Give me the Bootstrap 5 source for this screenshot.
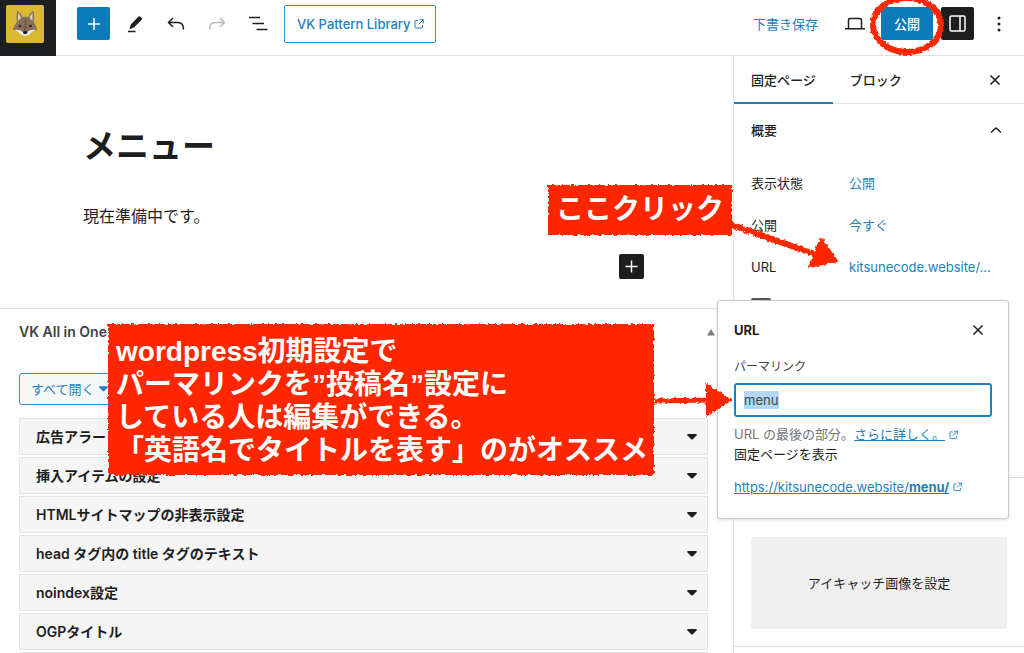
<!DOCTYPE html>
<html lang="ja">
<head>
<meta charset="utf-8">
<meta name="viewport" content="width=device-width, initial-scale=1">
<title>メニュー</title>
<link href="https://cdn.jsdelivr.net/npm/bootstrap@5.3.0/dist/css/bootstrap.min.css" rel="stylesheet">
<style>
:root { --accent: #0a7aba; --link: #1e80bd; --ink: #1e1e1e; --rule: #e0e0e0; --note: #ff2600; }
body { font-family: Inter, "Noto Sans CJK JP", sans-serif; font-size: 13px; line-height: 20px; color: var(--ink); background: #fff; }
a { color: var(--link); }
svg { display: block; }
.icon-btn { display: inline-flex; align-items: center; justify-content: center; border: 0; padding: 0; background: none; color: var(--ink); border-radius: 2px; }
.topbar { height: 56px; border-bottom: 1px solid var(--rule); }
.site-hub { width: 56px; height: 56px; background: #1d1e20; padding: 5px 0 0 6px; }
.tools-start { padding-left: 21px; }
.tools-end { padding-right: 17px; }
.tool { width: 33px; height: 33px; margin-bottom: 8px; }
.tool-primary { background: var(--accent); color: #fff; }
.tool-dark { background: var(--ink); color: #fff; }
.library-btn { height: 38px; margin: 0 0 8px 10px; padding: 0 11px 0 12px; border: 1px solid #3a93c7; border-radius: 2px; color: var(--link); background: #fff; font-weight: 500; }
.draft-btn { border: 0; background: none; color: var(--link); padding: 0; margin: 0 27px 8px 0; }
.publish-btn { width: 52px; height: 33px; border: 0; padding: 0; border-radius: 2px; color: #fff; background: var(--accent); font-weight: 500; }
.publish-ring { left: -13px; top: -13px; pointer-events: none; }
.canvas { padding: 65px 83px 0; height: 252px; }
.post-title { font-size: 33px; line-height: 50px; font-weight: 700; margin: 0 0 33px; }
.post-text { font-size: 16px; line-height: 24px; margin: 0; }
.inserter { width: 25px; height: 25px; margin: 26px 6px 0 0; background: var(--ink); color: #fff; }
.metabox { border-top: 1px solid var(--rule); padding: 13px 18px 0 19px; }
.metabox-title { font-size: 14px; line-height: 20px; font-weight: 600; color: #3c434a; margin: 0; }
.metabox-body { padding-right: 7px; }
.open-all { height: 32px; margin: 31px 0 13px; padding: 0 10px 0 11px; border: 1px solid #3a93c7; border-radius: 3px; background: #f6f7f7; color: var(--link); }
.option-row { width: 100%; height: 37px; margin-bottom: 2px; padding: 0 10px 0 16px; border: 1px solid #e4e4e4; background: #f5f5f5; color: var(--ink); font-size: 14px; font-weight: 600; text-align: left; }
.sidebar { width: 291px; border-left: 1px solid var(--rule); }
.tabs { height: 48px; border-bottom: 1px solid var(--rule); padding-right: 19px; }
.tab-btn { height: 48px; padding: 0 17px; border: 0; background: none; color: var(--ink); font-weight: 500; }
.tab-btn.active { border-bottom: 2px solid var(--link); padding-top: 2px; }
.summary { padding: 15px 17px 0 17px; height: 374px; border-bottom: 1px solid var(--rule); }
.summary-head { font-size: 13px; line-height: 22px; font-weight: 500; margin: 0 0 31px; }
.summary-row { height: 22px; line-height: 22px; margin-bottom: 20px; }
.summary-row dt { width: 98px; font-weight: 400; }
.summary-row dd { margin: 0; }
.template-icon { width: 20px; height: 16px; border: 2px solid #555; border-radius: 2px; }
.thumb-panel { padding: 59px 17px 17px; border-bottom: 1px solid var(--rule); }
.thumb-btn { width: 100%; height: 92px; border: 0; border-radius: 2px; background: #efefef; color: var(--ink); }
.url-popover { top: 244px; right: 15px; width: 292px; height: 219px; padding: 17px 16px; background: #fff; border: 1px solid #ccc; border-radius: 3px; box-shadow: 0 1px 3px rgba(0,0,0,.15); }
.url-popover h2 { font-size: 13px; line-height: 24px; font-weight: 700; margin: 0; }
.url-popover label { font-size: 12px; line-height: 20px; color: #444; margin: 15px 0 6px; }
.slug-field { height: 34px; padding: 0 8px; border: 2px solid var(--link); border-radius: 3px; }
.slug-field input { width: 100%; height: 18px; border: 0; outline: 0; padding: 0; color: #3a4650; background: linear-gradient(#b4d5f5, #b4d5f5) 0 0 / 35px 100% no-repeat; }
.help-line { line-height: 19px; color: #757575; margin: 8px 0 0; }
.page-url { margin: 13px 0 0; }
.callout { z-index: 3; color: #fff; font-family: "Liberation Sans", "Noto Sans CJK JP", sans-serif; font-weight: 700; font-size: 28px; margin: 0; white-space: nowrap; }
.callout::before { content: ""; position: absolute; inset: 0; z-index: -1; background: var(--note); filter: url(#rough); }
.callout-click { top: 129px; right: 292px; width: 184px; height: 50px; line-height: 50px; padding-left: 8px; }
.callout-slug { top: 268px; right: 370px; width: 546px; height: 151px; padding: 11px 8px; line-height: 33px; }
.arrow { z-index: 4; pointer-events: none; }
.arrow-click { top: 160px; right: 182px; }
.arrow-slug { top: 325px; right: 290px; }
</style>
</head>
<body>
<svg width="0" height="0" class="position-absolute" aria-hidden="true">
  <defs>
    <filter id="rough" x="-5%" y="-10%" width="110%" height="120%"><feTurbulence type="fractalNoise" baseFrequency="0.3" numOctaves="2" seed="4" result="n"/><feDisplacementMap in="SourceGraphic" in2="n" scale="4" xChannelSelector="R" yChannelSelector="G"/><feGaussianBlur stdDeviation="0.4"/></filter>
    <symbol id="ext" viewBox="0 0 10 10"><path d="M4 1.5H1.8Q1 1.500 1 2.300V8.200Q1 9 1.800 9H7.700Q8.500 9 8.500 8.200V6M5.500 .7H9.300V4.500M9.200 .8L4.500 5.500" fill="none" stroke="currentColor"/></symbol>
    <symbol id="cross" viewBox="0 0 12 12"><path d="M1.500 1.500L10.500 10.500M10.500 1.500L1.500 10.500" fill="none" stroke="currentColor" stroke-width="1.500"/></symbol>
    <symbol id="caret" viewBox="0 0 10 6"><path d="M.5 0H9.500Q10.200 .8 9.500 1.500L5.800 5.200Q5 6 4.200 5.200L.5 1.500Q-.2 .8 .5 0Z" fill="currentColor"/></symbol>
  </defs>
</svg>
<div class="d-flex flex-column vh-100 overflow-hidden">
  <header class="topbar d-flex align-items-center flex-shrink-0">
    <a href="#" class="site-hub flex-shrink-0" aria-label="サイト">
      <svg width="38" height="38" viewBox="0 0 38 38">
        <rect width="38" height="38" rx="2" fill="#dcb833"/>
        <path d="M11 6Q13 6 17 12Q19.500 11.500 22 12Q25 6 27.500 6Q28.500 12 28 17Q30 20 31 25L26 27Q23 31 19 31Q15 31 12 27L7 25Q8 20 11 17Q10 12 11 6Z" fill="#88705b"/>
        <path d="M12 8Q14.500 10 15 13L12 16ZM26.500 8Q24 10 23.500 13L26.500 16Z" fill="#d9d2c5"/>
        <path d="M8 25Q13 24 17 27L19 28L21 27Q25 24 30 25L26 27Q23 31 19 31Q15 31 12 27Z" fill="#f0ece5"/>
        <path d="M18 14H20.500L21 24L19.300 27L17.500 24Z" fill="#76604f"/>
        <circle cx="14" cy="21" r="1.300" fill="#222"/><circle cx="24.500" cy="21" r="1.300" fill="#222"/><ellipse cx="19.200" cy="27.500" rx="2.200" ry="1.700" fill="#222"/>
      </svg>
    </a>
    <div class="tools-start d-flex align-items-center">
      <button type="button" class="icon-btn tool tool-primary" aria-label="追加"><svg width="14" height="14" viewBox="0 0 14 14"><path d="M7 1V13M1 7H13" stroke="currentColor" stroke-width="1.500"/></svg></button>
      <button type="button" class="icon-btn tool ms-2" aria-label="ツール"><svg width="18" height="18" viewBox="0 0 18 18"><path d="M12.500 1.500Q13.500 .8 14.500 1.800L15.800 3Q16.500 4 15.700 4.800L8 12.500L3.500 14.200L4.800 9.500Z" fill="currentColor"/><path d="M2 16.500H9.500" stroke="currentColor" stroke-width="1.500"/></svg></button>
      <button type="button" class="icon-btn tool ms-2" aria-label="元に戻す"><svg width="18" height="14" viewBox="0 0 18 14"><path d="M6 1L1.500 5.500L6 10M1.800 5.500H11Q16.500 5.500 16.500 12.500" fill="none" stroke="currentColor" stroke-width="1.500"/></svg></button>
      <button type="button" class="icon-btn tool ms-2" aria-label="やり直し" disabled><svg width="18" height="14" viewBox="0 0 18 14"><path d="M12 1L16.500 5.500L12 10M16.200 5.500H7Q1.500 5.500 1.500 12.500" fill="none" stroke="#bbb" stroke-width="1.500"/></svg></button>
      <button type="button" class="icon-btn tool ms-2" aria-label="リスト表示"><svg width="20" height="15" viewBox="0 0 20 15"><path d="M1 1.500H12M4.500 7.500H16M8.500 13.500H19.500" stroke="currentColor" stroke-width="1.500"/></svg></button>
      <button type="button" class="library-btn d-flex align-items-center">VK Pattern Library<svg class="ms-1" width="10" height="10"><use href="#ext"/></svg></button>
    </div>
    <div class="tools-end d-flex align-items-center ms-auto">
      <button type="button" class="draft-btn">下書き保存</button>
      <button type="button" class="icon-btn mb-2" aria-label="プレビュー"><svg width="20" height="14" viewBox="0 0 20 14"><path d="M3.500 11V3Q3.500 1.500 5 1.500H15Q16.500 1.500 16.500 3V11M0 11.800H20" fill="none" stroke="currentColor" stroke-width="1.500"/></svg></button>
      <div class="position-relative ms-3 mb-2">
        <button type="button" class="publish-btn">公開</button>
        <svg class="publish-ring position-absolute" width="78" height="62" viewBox="0 0 78 62"><ellipse cx="39" cy="31" rx="34" ry="27" fill="none" stroke="#ff2600" stroke-width="6" filter="url(#rough)"/></svg>
      </div>
      <button type="button" class="icon-btn tool tool-dark ms-2" aria-label="設定"><svg width="17" height="17" viewBox="0 0 17 17"><rect x="1" y="1" width="15" height="15" rx="1.500" fill="none" stroke="currentColor" stroke-width="1.500"/><path d="M11 1V16" stroke="currentColor" stroke-width="1.500"/></svg></button>
      <button type="button" class="icon-btn tool" aria-label="オプション"><svg class="ms-3" width="4" height="16" viewBox="0 0 4 16" fill="currentColor"><circle cx="2" cy="2" r="1.500"/><circle cx="2" cy="8" r="1.500"/><circle cx="2" cy="14" r="1.500"/></svg></button>
    </div>
  </header>

  <div class="d-flex flex-grow-1 position-relative overflow-hidden">
    <main class="flex-grow-1">
      <div class="canvas">
        <h1 class="post-title">メニュー</h1>
        <p class="post-text">現在準備中です。</p>
        <div class="text-end"><button type="button" class="icon-btn inserter" aria-label="ブロックを追加"><svg width="13" height="13" viewBox="0 0 13 13"><path d="M6.500 .5V12.500M.5 6.500H12.500" stroke="currentColor" stroke-width="1.500"/></svg></button></div>
      </div>
      <section class="metabox">
        <div class="d-flex justify-content-between align-items-center">
          <h2 class="metabox-title">VK All in One Expansion Unit</h2>
          <svg width="8" height="7" viewBox="0 0 8 7"><path d="M0 6.500H8L4 0Z" fill="#787c82"/></svg>
        </div>
        <div class="metabox-body">
          <button type="button" class="open-all d-flex align-items-center">すべて開く<svg class="ms-1" width="9" height="6"><use href="#caret"/></svg></button>
          <button type="button" class="option-row d-flex align-items-center justify-content-between">広告アラート設定<svg width="10" height="6"><use href="#caret"/></svg></button>
          <button type="button" class="option-row d-flex align-items-center justify-content-between">挿入アイテムの設定<svg width="10" height="6"><use href="#caret"/></svg></button>
          <button type="button" class="option-row d-flex align-items-center justify-content-between">HTMLサイトマップの非表示設定<svg width="10" height="6"><use href="#caret"/></svg></button>
          <button type="button" class="option-row d-flex align-items-center justify-content-between">head タグ内の title タグのテキスト<svg width="10" height="6"><use href="#caret"/></svg></button>
          <button type="button" class="option-row d-flex align-items-center justify-content-between">noindex設定<svg width="10" height="6"><use href="#caret"/></svg></button>
          <button type="button" class="option-row d-flex align-items-center justify-content-between">OGPタイトル<svg width="10" height="6"><use href="#caret"/></svg></button>
          <div class="option-row"></div>
        </div>
      </section>
    </main>

    <aside class="sidebar flex-shrink-0">
      <div class="tabs d-flex align-items-center">
        <button type="button" class="tab-btn active">固定ページ</button>
        <button type="button" class="tab-btn">ブロック</button>
        <button type="button" class="icon-btn ms-auto me-1" aria-label="設定を閉じる"><svg width="12" height="12"><use href="#cross"/></svg></button>
      </div>
      <section class="summary">
        <h2 class="summary-head d-flex justify-content-between align-items-center">概要<svg class="me-1" width="14" height="8" viewBox="0 0 14 8"><path d="M2 6.500L7 2L12 6.500" fill="none" stroke="currentColor" stroke-width="1.500"/></svg></h2>
        <dl class="m-0">
          <div class="summary-row d-flex"><dt>表示状態</dt><dd><a href="#" class="text-decoration-none">公開</a></dd></div>
          <div class="summary-row d-flex"><dt>公開</dt><dd><a href="#" class="text-decoration-none">今すぐ</a></dd></div>
          <div class="summary-row d-flex"><dt>URL</dt><dd><a href="#" class="text-decoration-none">kitsunecode.website/...</a></dd></div>
        </dl>
        <div class="template-icon"></div>
      </section>
      <section class="thumb-panel"><button type="button" class="thumb-btn">アイキャッチ画像を設定</button></section>
    </aside>

    <section class="url-popover position-absolute">
      <div class="d-flex justify-content-between align-items-center"><h2>URL</h2><button type="button" class="icon-btn me-2" aria-label="閉じる"><svg width="12" height="12"><use href="#cross"/></svg></button></div>
      <label for="slug" class="d-block">パーマリンク</label>
      <div class="slug-field d-flex align-items-center"><input id="slug" type="text" value="menu"></div>
      <p class="help-line d-flex align-items-center">URL の最後の部分。<a href="#">さらに詳しく。</a><svg class="ms-1" width="9" height="10" color="#1e80bd"><use href="#ext"/></svg></p>
      <p class="m-0">固定ページを表示</p>
      <p class="page-url d-flex align-items-center"><a href="#">https://kitsunecode.website/<b>menu/</b></a><svg class="ms-1" width="9" height="10" color="#1e80bd"><use href="#ext"/></svg></p>
    </section>

    <p class="callout callout-click position-absolute">ここクリック</p>
    <p class="callout callout-slug position-absolute">wordpress初期設定で<br>パーマリンクを”投稿名”設定に<br>している人は編集ができる。<br>「英語名でタイトルを表す」のがオススメ</p>
    <svg class="arrow arrow-click position-absolute" width="112" height="56" viewBox="0 0 112 56"><g filter="url(#rough)"><path d="M0 8L84 38" stroke="#ff2600" stroke-width="6"/><path d="M91 22L107 45L79 51Z" fill="#ff2600" stroke="#ff2600" stroke-width="2" stroke-linejoin="round"/></g></svg>
    <svg class="arrow arrow-slug position-absolute" width="80" height="40" viewBox="0 0 80 40"><g filter="url(#rough)"><path d="M0 20L56 19" stroke="#ff2600" stroke-width="5"/><path d="M53 4L77 19L53 34Z" fill="#ff2600" stroke="#ff2600" stroke-width="2" stroke-linejoin="round"/></g></svg>
  </div>
</div>
<script src="https://cdn.jsdelivr.net/npm/bootstrap@5.3.0/dist/js/bootstrap.bundle.min.js"></script>
</body>
</html>
